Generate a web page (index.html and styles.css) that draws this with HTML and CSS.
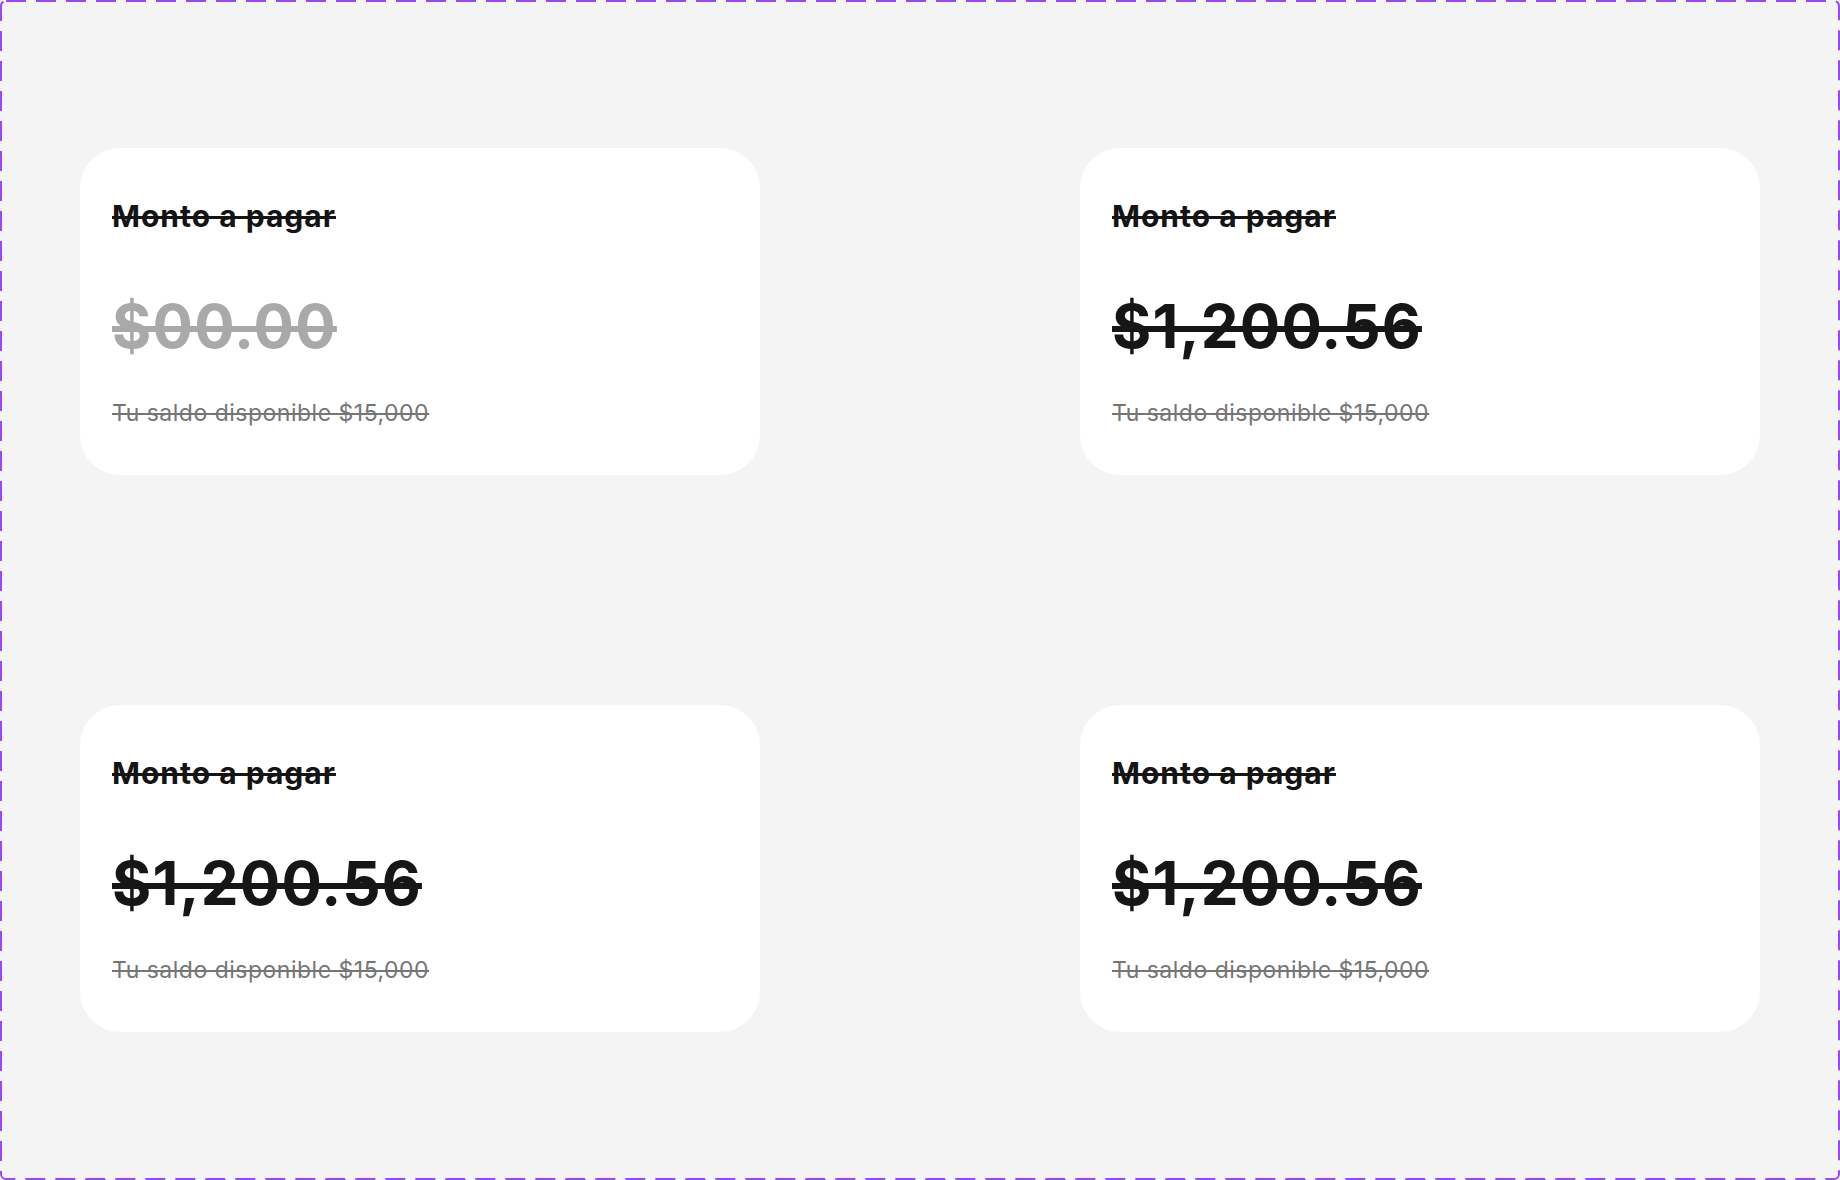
FILE: index.html
```html
<!DOCTYPE html>
<html lang="es">
<head>
<meta charset="utf-8">
<title>Monto a pagar</title>
<link rel="stylesheet" href="styles.css">
</head>
<body>
<main class="frame">
  <svg class="frame-border" width="1840" height="1180" viewBox="0 0 1840 1180" aria-hidden="true">
    <rect x="1" y="1" width="1838" height="1178" rx="5" ry="5" fill="none" stroke="#9747FF" stroke-width="2" stroke-dasharray="20 10"/>
  </svg>
  <div class="grid">
    <section class="card">
      <h2 class="card-title">Monto a pagar</h2>
      <p class="card-amount card-amount--empty">$00.00</p>
      <p class="card-balance">Tu saldo disponible $15,000</p>
    </section>
    <section class="card">
      <h2 class="card-title">Monto a pagar</h2>
      <p class="card-amount">$1,200.56</p>
      <p class="card-balance">Tu saldo disponible $15,000</p>
    </section>
    <section class="card">
      <h2 class="card-title">Monto a pagar</h2>
      <p class="card-amount">$1,200.56</p>
      <p class="card-balance">Tu saldo disponible $15,000</p>
    </section>
    <section class="card">
      <h2 class="card-title">Monto a pagar</h2>
      <p class="card-amount">$1,200.56</p>
      <p class="card-balance">Tu saldo disponible $15,000</p>
    </section>
  </div>
</main>
</body>
</html>
```
FILE: styles.css
```css
* { box-sizing: border-box; }
html, body { margin: 0; padding: 0; }
body {
  font-family: Inter, "Noto Sans", "Liberation Sans", sans-serif;
  background: #f4f4f4;
}
.frame {
  position: relative;
  width: 1840px;
  height: 1180px;
  background: #f4f4f4;
  padding: 148px 80px;
}
.frame-border {
  position: absolute;
  inset: 0;
  pointer-events: none;
}
.grid {
  display: grid;
  grid-template-columns: 680px 680px;
  grid-template-rows: 327px 327px;
  justify-content: space-between;
  align-content: space-between;
  height: 100%;
}
.card {
  background: #ffffff;
  border-radius: 40px;
  padding: 50px 32px 0;
  display: flex;
  flex-direction: column;
  align-items: flex-start;
}
.card-title {
  margin: 0;
  font-size: 30px;
  line-height: 1.2;
  font-weight: 700;
  letter-spacing: 1px;
  color: #141414;
  text-decoration: line-through;
}
.card-amount {
  margin: 56px 0 0;
  font-size: 60px;
  line-height: 1.2;
  font-weight: 700;
  letter-spacing: 1.2px;
  color: #161616;
  text-decoration: line-through;
}
.card-amount--empty { color: #a9a9a9; }
.card-balance {
  margin: 38px 0 0;
  font-size: 23px;
  line-height: 1.2;
  font-weight: 400;
  letter-spacing: 0.5px;
  color: #767676;
  text-decoration: line-through;
}
```
